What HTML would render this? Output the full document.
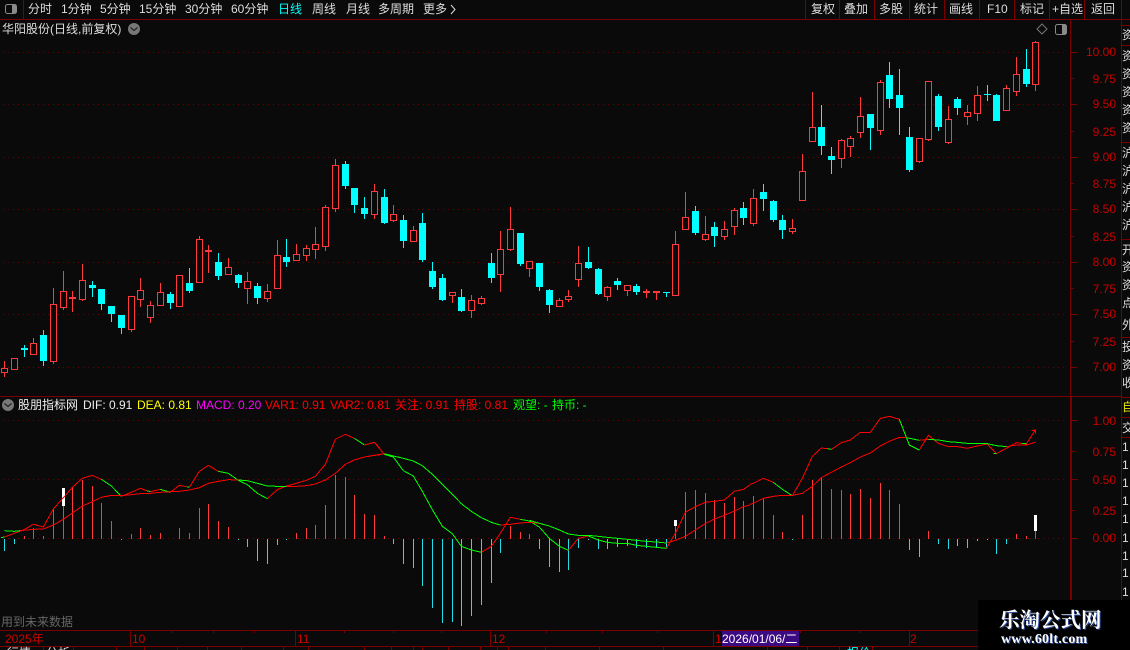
<!DOCTYPE html>
<html lang="zh"><head><meta charset="utf-8"><title>华阳股份</title>
<style>
html,body{margin:0;padding:0;background:#0a0a0a;width:1130px;height:650px;overflow:hidden}
#r{position:relative;width:1130px;height:650px;overflow:hidden;font-family:"Liberation Sans","WenQuanYi Zen Hei","Noto Sans CJK SC",sans-serif}
svg{position:absolute;left:0;top:0}
.t{position:absolute;white-space:pre;font-size:12px;line-height:14px;color:#ddd}
.a{position:absolute;white-space:pre;font-size:12px;line-height:14px;color:#c80000;right:14px}
.c{position:absolute;left:1122px;width:8px;overflow:hidden;font-size:12px;line-height:14px;color:#ddd;white-space:pre}
</style></head><body><div id="r">
<svg width="1130" height="650" viewBox="0 0 1130 650" shape-rendering="crispEdges" fill="none">
<!-- frame lines -->
<path stroke="#7a0000" d="M0 19.5H1130M0 396.5H1121M0 630.5H978M0 646.5H978M23.5 0V19M805.5 0V19M839.5 0V19M874.5 0V19M909.5 0V19M944.5 0V19M979.5 0V19M1014.5 0V19M1049.5 0V19M1084.5 0V19M1121.5 0V630M1070.5 19V396M1122 25.5H1130M1122 45.5H1130M1122 142.5H1130M1122 239.5H1130M1122 337.5H1130M1122 397.5H1130M1122 417.5H1130M1122 437.5H1130"/>
<path stroke="#7a0000" stroke-width="2" d="M1071 397V630"/>
<!-- axis ticks -->
<path stroke="#7a0000" d="M1071 52.5h6M1071 78.5h3M1071 104.5h6M1071 131.5h3M1071 157.5h6M1071 183.5h3M1071 209.5h6M1071 236.5h3M1071 262.5h6M1071 288.5h3M1071 314.5h6M1071 341.5h3M1071 367.5h6M1072 420.5h6M1072 451.5h3M1072 479.5h6M1072 510.5h3M1072 538.5h6"/>
<!-- dotted grid -->
<path stroke="#6e0000" stroke-dasharray="1 4" d="M3 52.5H1068M3 104.5H1068M3 157.5H1068M3 209.5H1068M3 262.5H1068M3 314.5H1068M3 367.5H1068M3 420.5H1068M3 479.5H1068M3 538.5H1068"/>
<!-- time axis separators -->
<path stroke="#7a0000" d="M130.5 631V646M295.5 631V646M490.5 631V646M713.5 631V646M909.5 631V646M171.5 631v2M213.5 631v2M254.5 631v2M344.5 631v2M393.5 631v2M441.5 631v2M546.5 631v2M602.5 631v2M657.5 631v2M800.5 631v2M859.5 631v2M43.5 647v3M73.5 647v3M116.5 647v3M144.5 647v3M177.5 647v3M207.5 647v3M241.5 647v3M283.5 647v3M308.5 647v3M364.5 647v3M413.5 647v3M448.5 647v3M497.5 647v3M391.5 647v3M422.5 647v3M480.5 647v3M508.5 647v3M545.5 647v3M599.5 647v3M663.5 647v3M767.5 647v3M807.5 647v3M839.5 647v3M872.5 647v3"/>
<rect x="722" y="631" width="77" height="15" fill="#3c0a82"/>
<!-- red wicks -->
<path stroke="#ff3a3a" d="M4.5 361V377M14.5 358V369M33.5 338V355M53.5 288V364M63.5 271V310M72.5 291V312M82.5 264V301M131.5 296V332M140.5 278V307M150.5 301V323M160.5 283V306M179.5 275V306M199.5 236V283M208.5 245V273M228.5 258V274M247.5 272V304M267.5 284V302M277.5 240V288M296.5 244V260M306.5 245V261M315.5 227V259M325.5 205V251M335.5 159V212M374.5 184V219M393.5 205V222M413.5 226V241M452.5 292V303M471.5 295V318M481.5 296V305M500.5 231V292M510.5 207V251M529.5 261V277M559.5 298V307M568.5 290V302M578.5 246V287M607.5 286V301M627.5 285V296M646.5 289V298M656.5 291V300M675.5 231V295M685.5 192V229M705.5 216V241M724.5 221V240M734.5 208V235M753.5 189V226M792.5 219V234M802.5 154V201M812.5 92V141M841.5 139V168M850.5 136V157M860.5 97V138M880.5 80V135M919.5 138V163M928.5 81V141M948.5 106V144M967.5 105V125M977.5 86V121M1006.5 85V110M1016.5 57V96M1035.5 41V91"/>
<!-- red bodies (hollow) -->
<path stroke="#ff3a3a" fill="#0a0a0a" d="M1.5 368.5h6v4h-6zM11.5 358.5h6v11h-6zM30.5 343.5h6v11h-6zM50.5 304.5h6v57h-6zM60.5 291.5h6v16h-6zM79.5 280.5h6v19h-6zM128.5 296.5h6v33h-6zM137.5 290.5h6v9h-6zM147.5 305.5h6v12h-6zM157.5 292.5h6v13h-6zM176.5 275.5h6v31h-6zM196.5 239.5h6v43h-6zM225.5 267.5h6v7h-6zM244.5 281.5h6v7h-6zM264.5 291.5h6v7h-6zM274.5 255.5h6v33h-6zM293.5 254.5h6v6h-6zM303.5 248.5h6v7h-6zM312.5 244.5h6v5h-6zM322.5 207.5h6v39h-6zM332.5 165.5h6v43h-6zM371.5 191.5h6v23h-6zM390.5 214.5h6v6h-6zM410.5 230.5h6v11h-6zM449.5 292.5h6v3h-6zM468.5 300.5h6v10h-6zM478.5 298.5h6v5h-6zM497.5 249.5h6v25h-6zM507.5 229.5h6v20h-6zM526.5 261.5h6v7h-6zM556.5 300.5h6v6h-6zM565.5 296.5h6v3h-6zM575.5 263.5h6v16h-6zM604.5 287.5h6v9h-6zM624.5 285.5h6v5h-6zM672.5 244.5h6v51h-6zM682.5 217.5h6v12h-6zM702.5 234.5h6v5h-6zM721.5 229.5h6v7h-6zM731.5 210.5h6v16h-6zM750.5 198.5h6v25h-6zM789.5 228.5h6v3h-6zM799.5 171.5h6v29h-6zM809.5 127.5h6v14h-6zM838.5 140.5h6v18h-6zM847.5 138.5h6v8h-6zM857.5 116.5h6v16h-6zM877.5 82.5h6v48h-6zM916.5 138.5h6v23h-6zM925.5 81.5h6v58h-6zM945.5 119.5h6v23h-6zM964.5 112.5h6v4h-6zM974.5 95.5h6v18h-6zM1003.5 88.5h6v22h-6zM1013.5 74.5h6v17h-6zM1032.5 42.5h6v42h-6z"/>
<path fill="#ff3a3a" d="M69 297h7v2h-7zM205 250h7v2h-7zM643 291h7v2h-7zM653 291h7v2h-7z"/>
<!-- cyan wicks -->
<path stroke="#00ffff" d="M24.5 345V357M43.5 330V366M92.5 281V297M101.5 289V310M111.5 306V322M121.5 315V334M170.5 292V309M189.5 268V293M218.5 253V280M238.5 274V288M257.5 283V304M286.5 239V267M345.5 161V189M354.5 188V213M364.5 197V219M384.5 189V224M403.5 215V248M422.5 213V262M432.5 262V289M442.5 274V301M461.5 289V312M491.5 253V283M520.5 233V266M539.5 263V291M549.5 289V313M588.5 247V269M598.5 268V295M617.5 278V290M636.5 284V295M666.5 292V297M695.5 206V235M714.5 222V247M743.5 202V225M763.5 184V211M773.5 200V222M782.5 215V239M821.5 105V155M831.5 147V174M870.5 114V150M889.5 62V108M899.5 69V135M909.5 127V172M938.5 94V131M957.5 97V115M987.5 85V101M996.5 94V121M1026.5 49V87"/>
<!-- cyan bodies -->
<path fill="#00ffff" d="M21 348h7v2h-7zM40 335h7v26h-7zM89 285h7v3h-7zM98 289h7v15h-7zM108 306h7v8h-7zM118 315h7v13h-7zM167 294h7v9h-7zM186 283h7v8h-7zM215 262h7v14h-7zM235 275h7v8h-7zM254 286h7v12h-7zM283 257h7v5h-7zM342 164h7v22h-7zM351 188h7v17h-7zM361 208h7v6h-7zM381 197h7v26h-7zM400 220h7v21h-7zM419 223h7v37h-7zM429 271h7v16h-7zM439 278h7v22h-7zM458 297h7v14h-7zM488 263h7v15h-7zM517 233h7v31h-7zM536 263h7v24h-7zM546 290h7v15h-7zM585 262h7v6h-7zM595 269h7v25h-7zM614 281h7v4h-7zM633 286h7v6h-7zM663 292h7v1h-7zM692 211h7v22h-7zM711 227h7v9h-7zM740 208h7v10h-7zM760 192h7v7h-7zM770 201h7v19h-7zM779 220h7v10h-7zM818 127h7v19h-7zM828 156h7v4h-7zM867 114h7v14h-7zM886 75h7v24h-7zM896 95h7v13h-7zM906 137h7v33h-7zM935 96h7v31h-7zM954 99h7v9h-7zM984 94h7v1h-7zM993 95h7v26h-7zM1023 69h7v15h-7z"/>
<!-- MACD bars -->
<path stroke="#ff3a3a" d="M24.5 536V539M33.5 528V539M43.5 536V539M53.5 508V539M63.5 506V539M72.5 487V539M82.5 480V539M92.5 486V539M101.5 503V539M111.5 521V539M131.5 534V539M140.5 528V539M150.5 535V539M160.5 533V539M179.5 528V539M189.5 533V539M199.5 508V539M208.5 504V539M218.5 521V539M228.5 527V539M296.5 533V539M306.5 528V539M315.5 525V539M325.5 505V539M335.5 475V539M345.5 477V539M354.5 495V539M364.5 514V539M374.5 515V539M384.5 536V539M510.5 526V539M520.5 532V539M529.5 534V539M675.5 526V539M685.5 492V539M695.5 490V539M705.5 493V539M714.5 500V539M724.5 503V539M734.5 497V539M743.5 501V539M753.5 496V539M763.5 498V539M773.5 515V539M782.5 532V539M802.5 515V539M812.5 480V539M821.5 478V539M831.5 489V539M841.5 490V539M850.5 494V539M860.5 489V539M870.5 498V539M880.5 483V539M889.5 490V539M899.5 504V539M928.5 531V539M1016.5 534V539M1026.5 536V539M1035.5 531V539"/>
<path stroke="#22dde8" d="M4.5 539V551M14.5 539V544M121.5 539V540M238.5 539V540M247.5 539V547M257.5 539V561M267.5 539V564M277.5 539V545M286.5 539V540M393.5 539V544M403.5 539V564M413.5 539V568M422.5 539V586M432.5 539V608M442.5 539V623M452.5 539V622M461.5 539V626M471.5 539V616M481.5 539V605M491.5 539V583M500.5 539V553M539.5 539V549M549.5 539V567M559.5 539V572M568.5 539V570M578.5 539V548M588.5 539V540M598.5 539V549M607.5 539V549M617.5 539V547M627.5 539V546M636.5 539V548M646.5 539V548M656.5 539V547M666.5 539V548M792.5 539V540M909.5 539V550M919.5 539V557M938.5 539V544M948.5 539V549M957.5 539V546M967.5 539V548M977.5 539V541M987.5 539V540M996.5 539V554M1006.5 539V544"/>
<!-- markers -->
<path fill="#fff" d="M62 488h3v18h-3zM674 520h3v6h-3zM1034 515h3v16h-3z"/>
<!-- DIF / DEA lines panel 1 -->
<g transform="translate(0,395) scale(.33333)" stroke-width="3">
<path stroke="#ff0000" d="M13 426L43 415L70 405L100 388L130 396L160 342L190 308L217 277L247 250L277 241L304 253M364 304L394 292L421 280L440 287M451 290L481 283M511 292L538 271L560 275M568 277L598 229L625 211L655 229M802 311L832 284L859 273L889 265L919 256L946 244L976 208L1006 133L1036 118L1063 130M1093 150L1123 142L1140 160"/>
<path stroke="#00ff00" d="M3 428L13 426M304 253L334 273L364 304M440 287L451 290M481 283L511 292M560 275L568 277M655 229L685 235L715 256L742 269L772 295L802 311M1063 130L1093 150"/>
<path stroke="#ff0000" d="M60 407L70 406L100 403L130 402L160 390L190 373L217 354L247 333L277 320L304 307L334 301L364 302L394 299L421 296L451 295L481 292L511 290L538 289L568 285L598 278L625 265L655 259L685 254L715 255M859 274L889 274L919 272L946 267L976 255L1006 235L1036 208L1063 195L1093 186L1123 181L1140 180"/>
<path stroke="#00ff00" d="M13 407L43 409L60 407M715 255L742 257L772 265L802 273L832 274L859 274"/>
</g>
<!-- panel 2 -->
<g transform="translate(370,395) scale(.33333)" stroke-width="3">
<path stroke="#ff0000" d="M0 145L13 142L43 178M334 472L364 454L391 415L421 367L451 373M595 466L625 430L655 423M889 460L916 415L946 352L976 335L1006 322L1033 319L1063 315L1093 289L1120 283L1140 270"/>
<path stroke="#00ff00" d="M43 178L70 186L100 227L130 243L157 289L187 344L217 394L247 416L274 454L304 465L334 472M451 373L478 378L508 396L538 430L568 454L595 466M655 423L685 435L712 442L742 445L772 445L799 451L829 454L859 457L889 460"/>
<path stroke="#ff0000" d="M0 183L43 176M391 390L421 388L451 384L478 382L508 385M889 444L916 436L946 424L976 405L1006 386L1033 372L1063 361L1093 348L1120 335L1140 330"/>
<path stroke="#00ff00" d="M43 176L70 183L100 190L130 198L157 212L187 238L217 268L247 298L274 326L304 349L334 368L364 382L391 390M478 376L508 385L538 393L568 405L595 417L625 421L655 421L685 424L712 427L742 430L772 433L799 436L829 439L859 441L889 444"/>
</g>
<!-- panel 3 -->
<g transform="translate(750,395) scale(.33333)" stroke-width="3">
<path stroke="#ff0000" d="M0 268L10 265L40 250L70 262M127 302L157 250L187 184L214 159L232 161M244 163L274 143L301 135L331 112L361 112L391 70L418 64L448 73M508 165L535 121L565 145L595 155L622 155L652 160L682 153L712 147L739 176L769 160L799 143L829 147L856 105"/>
<path stroke="#00ff00" d="M70 262L97 283L127 302M232 161L244 163M448 73L478 150L508 165M730 175L739 176"/>
<path stroke="#ff0000" d="M0 328L10 325L40 310L70 304L97 301L127 301L157 295L187 274L214 248L244 232L274 216L301 203L331 186L361 174L391 153L418 139L448 127L470 128M508 136L535 133M770 155L799 150L829 150L856 142M845 107L856 105L856 116"/>
<path stroke="#00ff00" d="M470 128L508 136M535 133L565 135L595 140L622 142L652 145L682 146L712 146L739 152L770 155M816 146L830 146"/>
</g>
</svg>
<svg width="1130" height="650" viewBox="0 0 1130 650">
<rect x="5.5" y="4.5" width="11" height="9" rx="2" fill="#0a0a0a" stroke="#8a8a8a"/><rect x="12" y="5" width="4" height="8" fill="#8a8a8a"/>
<rect x="1055.5" y="24.5" width="11" height="10" rx="2" fill="#0a0a0a" stroke="#8a8a8a"/><rect x="1062" y="25" width="4" height="9" fill="#8a8a8a"/>
<path d="M1042 24l5 5-5 5-5-5z" fill="none" stroke="#777"/>
<circle cx="134" cy="29" r="6" fill="#777"/><path d="M130.5 27.5l3.5 3 3.5-3" fill="none" stroke="#222" stroke-width="1.2"/>
<circle cx="8" cy="405" r="6" fill="#777"/><path d="M4.500 403.500l3.500 3 3.500-3" fill="none" stroke="#222" stroke-width="1.2"/>
<path d="M451 5l4 4.500-4 4.500" fill="none" stroke="#ddd"/>
</svg>
<!-- toolbar -->
<div class="t" style="left:28px;top:2px">分时</div>
<div class="t" style="left:61px;top:2px">1分钟</div>
<div class="t" style="left:100px;top:2px">5分钟</div>
<div class="t" style="left:139px;top:2px">15分钟</div>
<div class="t" style="left:185px;top:2px">30分钟</div>
<div class="t" style="left:231px;top:2px">60分钟</div>
<div class="t" style="left:278px;top:2px;color:#00ffff">日线</div>
<div class="t" style="left:312px;top:2px">周线</div>
<div class="t" style="left:346px;top:2px">月线</div>
<div class="t" style="left:378px;top:2px">多周期</div>
<div class="t" style="left:423px;top:2px">更多</div>
<div class="t" style="left:811px;top:2px">复权</div>
<div class="t" style="left:844px;top:2px">叠加</div>
<div class="t" style="left:879px;top:2px">多股</div>
<div class="t" style="left:914px;top:2px">统计</div>
<div class="t" style="left:949px;top:2px">画线</div>
<div class="t" style="left:987px;top:2px">F10</div>
<div class="t" style="left:1020px;top:2px">标记</div>
<div class="t" style="left:1052px;top:2px">+自选</div>
<div class="t" style="left:1091px;top:2px">返回</div>
<div class="t" style="left:2px;top:22px">华阳股份(日线,前复权)</div>
<!-- price axis -->
<div class="a" style="top:45px">10.00</div><div class="a" style="top:72px">9.75</div><div class="a" style="top:97px">9.50</div><div class="a" style="top:125px">9.25</div><div class="a" style="top:150px">9.00</div><div class="a" style="top:177px">8.75</div><div class="a" style="top:202px">8.50</div><div class="a" style="top:230px">8.25</div><div class="a" style="top:255px">8.00</div><div class="a" style="top:282px">7.75</div><div class="a" style="top:307px">7.50</div><div class="a" style="top:335px">7.25</div><div class="a" style="top:360px">7.00</div>
<div class="a" style="top:414px">1.00</div><div class="a" style="top:445px">0.75</div><div class="a" style="top:473px">0.50</div><div class="a" style="top:504px">0.25</div><div class="a" style="top:531px">0.00</div>
<!-- indicator legend -->
<div class="t" style="left:18px;top:398px;color:#eee">股朋指标网</div>
<div class="t" style="left:83px;top:398px;color:#eee">DIF: 0.91</div>
<div class="t" style="left:137px;top:398px;color:#ffff00">DEA: 0.81</div>
<div class="t" style="left:196px;top:398px;color:#ff00ff">MACD: 0.20</div>
<div class="t" style="left:265px;top:398px;color:#ff0000">VAR1: 0.91</div>
<div class="t" style="left:330px;top:398px;color:#ff0000">VAR2: 0.81</div>
<div class="t" style="left:395px;top:398px;color:#ff0000">关注: 0.91</div>
<div class="t" style="left:454px;top:398px;color:#ff0000">持股: 0.81</div>
<div class="t" style="left:513px;top:398px;color:#00ff00">观望: -</div>
<div class="t" style="left:552px;top:398px;color:#00ff00">持币: -</div>
<div class="t" style="left:1px;top:615px;color:#666">用到未来数据</div>
<!-- time axis -->
<div class="t" style="left:5px;top:632px;color:#c80000">2025年</div>
<div class="t" style="left:132px;top:632px;color:#c80000">10</div>
<div class="t" style="left:297px;top:632px;color:#c80000">11</div>
<div class="t" style="left:492px;top:632px;color:#c80000">12</div>
<div class="t" style="left:715px;top:632px;color:#c80000">1</div>
<div class="t" style="left:722px;top:632px;color:#fff">2026/01/06/二</div>
<div class="t" style="left:910px;top:632px;color:#c80000">2</div>
<div class="t" style="left:7px;top:646px">行情</div>
<div class="t" style="left:46px;top:646px">分析</div>
<div class="t" style="left:847px;top:646px;color:#00ffff">报价</div>
<!-- right column -->
<div class="c" style="top:28px">资</div>
<div class="c" style="top:47px;line-height:18px">资
资
资
资
资</div>
<div class="c" style="top:144px;line-height:18px">沪
沪
沪
沪
沪</div>
<div class="c" style="top:243px">开</div><div class="c" style="top:260px">资</div><div class="c" style="top:278px">资</div><div class="c" style="top:296px">点</div><div class="c" style="top:318px">外</div>
<div class="c" style="top:340px">投</div><div class="c" style="top:358px">资</div><div class="c" style="top:376px">收</div>
<div class="c" style="top:400px;color:#e6e600">自</div>
<div class="c" style="top:421px">交</div>
<div class="c" style="top:440px">1</div><div class="c" style="top:458px">1</div><div class="c" style="top:476px">1</div><div class="c" style="top:494px">1</div><div class="c" style="top:512px">1</div><div class="c" style="top:531px">1</div><div class="c" style="top:549px">1</div><div class="c" style="top:566px">1</div><div class="c" style="top:585px">1</div>
<!-- watermark -->
<div style="position:absolute;left:978px;top:600px;width:152px;height:50px;background:#000">
<div style="position:absolute;left:21px;top:5px;white-space:pre;font:bold 20.500px/26px 'Noto Serif CJK SC','Liberation Serif',serif;color:#fff;text-shadow:1px 1px 0 #2a4a9a">乐淘公式网</div>
<div style="position:absolute;left:23px;top:32px;white-space:pre;font:bold 14px/16px 'Liberation Serif',serif;color:#fff;letter-spacing:.2px;text-shadow:1px 1px 0 #2a4a9a">www.60lt.com</div>
</div>
</div></body></html>
